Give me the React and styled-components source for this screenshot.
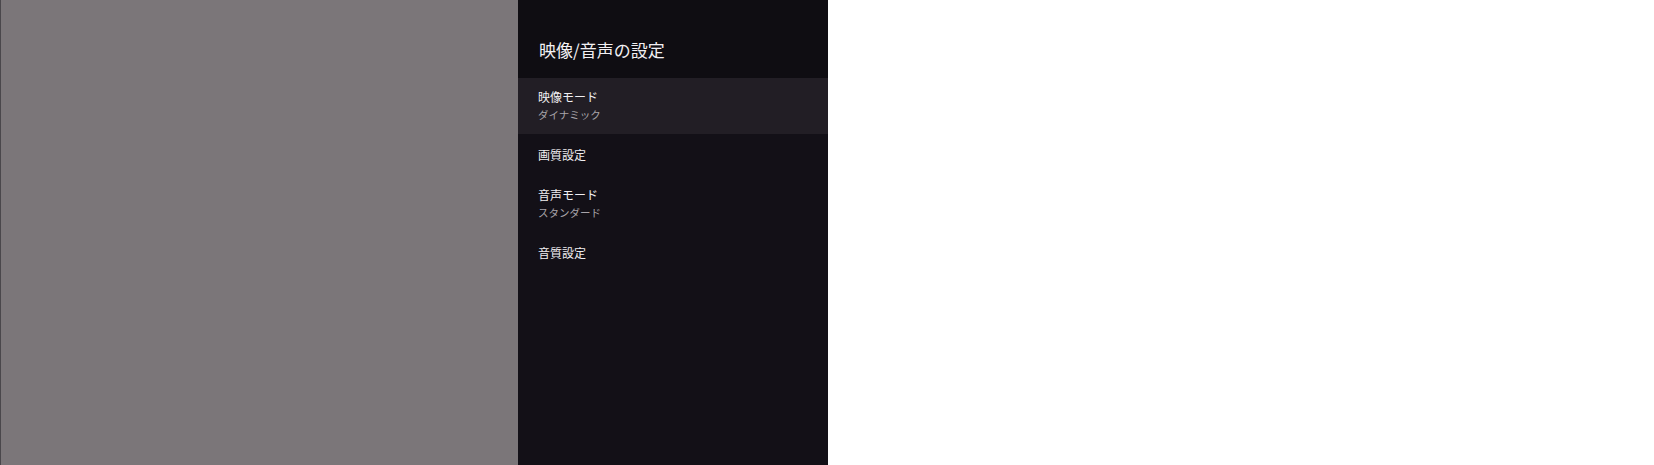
import React from 'react'
import styled, { createGlobalStyle } from 'styled-components'

const GlobalStyle = createGlobalStyle`
  html, body { margin: 0; padding: 0; background: #ffffff; }
  body { font-family: "Noto Sans CJK JP", "Noto Sans", sans-serif; }
`

const Screen = styled.div`
  display: flex;
  width: 828px;
  height: 465px;
`

const Backdrop = styled.div`
  width: 518px;
  background: #7b7679;
  border-left: 1px solid #4a474b;
  box-sizing: border-box;
`

const Panel = styled.div`
  width: 310px;
  display: flex;
  flex-direction: column;
  background: #131017;
`

const Header = styled.div`
  height: 78px;
  box-sizing: border-box;
  padding: 35px 0 0 21px;
  background: #0f0d12;
  color: #f2f0f3;
  font-size: 17px;
  line-height: 30px;
`

const Item = styled.div`
  height: ${p => (p.sub ? 56 : 42)}px;
  box-sizing: border-box;
  padding: ${p => (p.sub ? 10 : 12)}px 0 0 20px;
  background: ${p => (p.active ? '#221e25' : 'transparent')};
  display: flex;
  flex-direction: column;
`

const ItemTitle = styled.div`
  color: #f0eef1;
  font-size: 12px;
  line-height: 18px;
`

const ItemSub = styled.div`
  color: #a8a4aa;
  font-size: 10.5px;
  line-height: 17px;
`

const items = [
  { title: '映像モード', sub: 'ダイナミック', active: true },
  { title: '画質設定' },
  { title: '音声モード', sub: 'スタンダード' },
  { title: '音質設定' },
]

export default function App() {
  return (
    <>
      <GlobalStyle />
      <Screen>
        <Backdrop />
        <Panel>
          <Header>映像/音声の設定</Header>
          {items.map(it => (
            <Item key={it.title} sub={it.sub} active={it.active}>
              <ItemTitle>{it.title}</ItemTitle>
              {it.sub && <ItemSub>{it.sub}</ItemSub>}
            </Item>
          ))}
        </Panel>
      </Screen>
    </>
  )
}
